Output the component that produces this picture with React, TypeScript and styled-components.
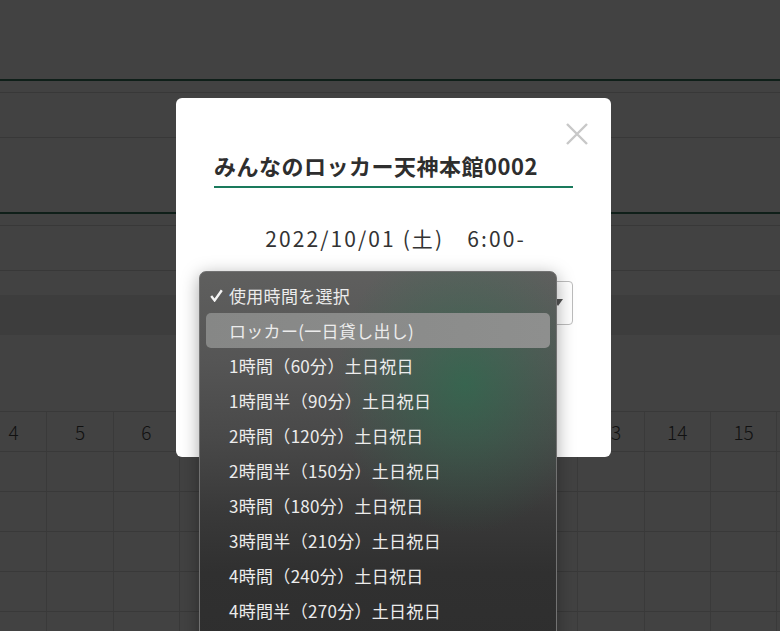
import React, { FC } from "react";
import styled, { createGlobalStyle } from "styled-components";

const GlobalStyle = createGlobalStyle`
  html, body {
    margin: 0;
    padding: 0;
    background: #424242;
    font-family: "Noto Sans CJK JP", "Noto Sans", sans-serif;
  }
`;

const days = [4, 5, 6, 7, 8, 9, 10, 11, 12, 13, 14, 15, 0];

const options = [
  "ロッカー(一日貸し出し)",
  "1時間（60分）土日祝日",
  "1時間半（90分）土日祝日",
  "2時間（120分）土日祝日",
  "2時間半（150分）土日祝日",
  "3時間（180分）土日祝日",
  "3時間半（210分）土日祝日",
  "4時間（240分）土日祝日",
  "4時間半（270分）土日祝日",
];

const App: FC = () => {
  return (
    <>
      <GlobalStyle />
      <SPage>
        <SBand h={79} />
        <SGreenRule />
        <SBand h={11} line />
        <SBand h={44} line />
        <SBand h={74} />
        <SGreenRule />
        <SBand h={11} line />
        <SBand h={44} line />
        <SBand h={24} />
        <SBand h={40} tone="#3d3d3d" />
        <SBand h={76} />

        <SGrid>
          <SGridRow>
            {days.map((d) => (
              <SCell key={d}>{d || ""}</SCell>
            ))}
          </SGridRow>
          {[0, 1, 2, 3, 4].map((r) => (
            <SGridRow key={r}>
              {days.map((d) => (
                <SCell key={d} />
              ))}
            </SGridRow>
          ))}
        </SGrid>

        <SModal>
          <SClose aria-label="close">
            <svg width="22" height="22" viewBox="0 0 22 22">
              <path
                d="M1 1 L21 21 M21 1 L1 21"
                stroke="#c8c8c8"
                strokeWidth="2.4"
                fill="none"
              />
            </svg>
          </SClose>
          <STitle>みんなのロッカー天神本館0002</STitle>
          <SDate>2022/10/01 (土)　6:00-</SDate>
          <SSelect>
            <SArrow />
          </SSelect>
        </SModal>

        <SMenu>
          <SItem>
            <SCheck width="13" height="13" viewBox="0 0 13 13">
              <path
                d="M1.2 7 L4.6 11.4 L11.8 1.2"
                stroke="#f4f4f4"
                strokeWidth="2.4"
                fill="none"
              />
            </SCheck>
            使用時間を選択
          </SItem>
          {options.map((o, i) => (
            <SItem key={o} active={i === 0}>
              {o}
            </SItem>
          ))}
        </SMenu>
      </SPage>
    </>
  );
};

export default App;

const SPage = styled.div`
  position: relative;
  width: 780px;
  height: 631px;
  overflow: hidden;
  background: #424242;
`;

const SBand = styled.div<{ h: number; line?: boolean; tone?: string }>`
  height: ${(p) => p.h}px;
  background: ${(p) => p.tone || "#424242"};
  border-bottom: ${(p) => (p.line ? "1px solid #383838" : "none")};
`;

const SGreenRule = styled.div`
  height: 2px;
  background: #0f1f19;
`;

const SGrid = styled.div`
  margin-left: -19px;
  border-top: 1px solid #393939;
`;

const SGridRow = styled.div`
  display: flex;
  height: 39px;
  border-bottom: 1px solid #393939;
`;

const SCell = styled.div`
  flex: 0 0 66.36px;
  box-sizing: border-box;
  border-right: 1px solid #3a3a3a;
  display: flex;
  align-items: center;
  justify-content: center;
  color: #111;
  font-size: 19px;
  font-weight: 300;
`;

const SModal = styled.div`
  position: absolute;
  left: 176px;
  top: 98px;
  width: 435px;
  height: 359px;
  box-sizing: border-box;
  padding: 52px 38px 0;
  background: #fff;
  border-radius: 6px;
`;

const SClose = styled.button`
  position: absolute;
  top: 25px;
  right: 23px;
  width: 22px;
  height: 22px;
  padding: 0;
  border: none;
  background: none;
  display: flex;
`;

const STitle = styled.h2`
  margin: 0;
  height: 30px;
  line-height: 30px;
  padding-bottom: 6px;
  border-bottom: 2px solid #1a7a5c;
  font-size: 22px;
  font-weight: 700;
  letter-spacing: 0.5px;
  color: #2e2e2e;
  white-space: nowrap;
`;

const SDate = styled.p`
  margin: 35px 0 0;
  padding-left: 4px;
  height: 30px;
  line-height: 30px;
  text-align: center;
  font-size: 21px;
  font-weight: 400;
  letter-spacing: 2.1px;
  color: #333;
  white-space: pre;
`;

const SSelect = styled.div`
  position: relative;
  margin-top: 28px;
  height: 44px;
  box-sizing: border-box;
  border: 1px solid #bdbdbd;
  border-radius: 4px;
`;

const SArrow = styled.span`
  position: absolute;
  right: 9px;
  top: 17px;
  width: 0;
  height: 0;
  border-left: 5px solid transparent;
  border-right: 5px solid transparent;
  border-top: 7px solid #555;
`;

const SMenu = styled.ul`
  position: absolute;
  left: 199px;
  top: 271px;
  width: 358px;
  height: 420px;
  box-sizing: border-box;
  margin: 0;
  padding: 6px 6px 0;
  list-style: none;
  border: 1px solid #727272;
  border-radius: 7px;
  box-shadow: 0 4px 18px rgba(0, 0, 0, 0.35);
  background:
    radial-gradient(ellipse 130px 150px at 265px 112px, rgba(40, 112, 78, 0.62), rgba(40, 112, 78, 0.25) 55%, rgba(40, 112, 78, 0) 100%),
    linear-gradient(180deg, #5f5f5e 0px, #555555 90px, #484848 170px, #393939 240px, #303030 300px, #2d2d2d 420px);
`;

const SItem = styled.li<{ active?: boolean }>`
  position: relative;
  height: 35px;
  line-height: 35px;
  padding-left: 23px;
  border-radius: 5px;
  font-size: 17px;
  letter-spacing: 0.3px;
  color: #ececec;
  white-space: nowrap;
  background: ${(p) =>
    p.active ? "linear-gradient(90deg, #868786, #8e8f8e)" : "transparent"};
`;

const SCheck = styled.svg`
  position: absolute;
  left: 4px;
  top: 11px;
`;
